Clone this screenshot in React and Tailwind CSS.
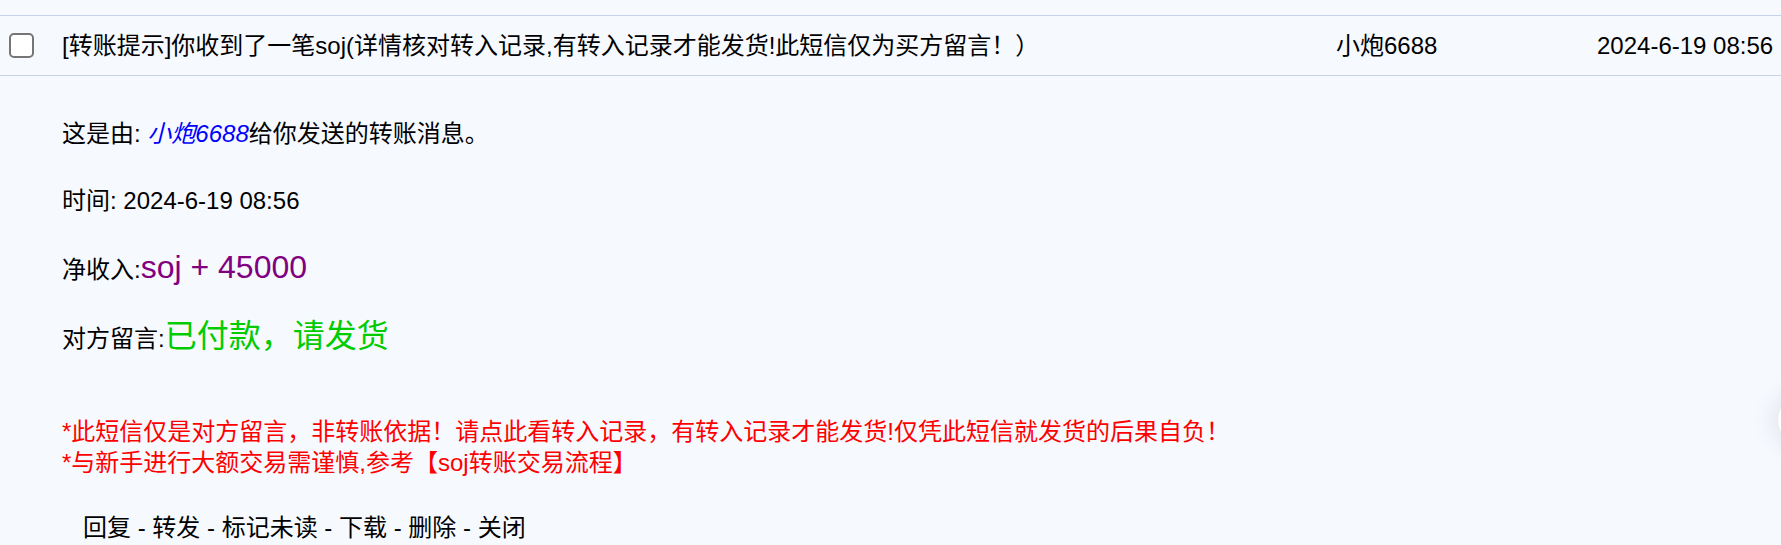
export default function App() {
  return (
    <div className="relative w-full h-[545px] overflow-hidden bg-[#f6f9fe] text-black text-[24px] font-['Liberation_Sans','Noto_Sans_CJK_SC',sans-serif] pt-[15px]">
      {/* message row */}
      <div className="flex items-center h-[61px] border-y border-[#c3d4e8] leading-[31px]">
        <span className="ml-[9px] w-[25px] h-[25px] shrink-0 rounded-[5px] border-2 border-[#767676] bg-white" />
        <div className="ml-[28px] w-[1274px] shrink-0 whitespace-nowrap">
          [转账提示]你收到了一笔soj(详情核对转入记录,有转入记录才能发货!此短信仅为买方留言！）
        </div>
        <div className="w-[261px] shrink-0 whitespace-nowrap">小炮6688</div>
        <div className="ml-auto pr-[9px] whitespace-nowrap">2024-6-19 08:56</div>
      </div>

      {/* message body */}
      <div className="pl-[62px] pt-[42px] leading-[31px]">
        <div>
          这是由: <a className="italic text-[#0000ff]">小炮6688</a>给你发送的转账消息。
        </div>
        <div className="mt-[36px]">时间: 2024-6-19 08:56</div>
        <div className="mt-[36px]">
          净收入:<span className="text-[32px] text-[#800080]">soj + 45000</span>
        </div>
        <div className="mt-[36px]">
          对方留言:<span className="text-[32px] text-[#00cc00]">已付款，请发货</span>
        </div>
        <div className="mt-[62px] text-[#ff0000]">
          <div>*此短信仅是对方留言，非转账依据！请点此看转入记录，有转入记录才能发货!仅凭此短信就发货的后果自负！</div>
          <div>*与新手进行大额交易需谨慎,参考【soj转账交易流程】</div>
        </div>
        <div className="mt-[34px] pl-[21px] whitespace-nowrap">
          回复 - 转发 - 标记未读 - 下载 - 删除 - 关闭
        </div>
      </div>

      {/* floating side button */}
      <div className="absolute left-[1778px] top-[396px] w-[48px] h-[48px] rounded-full bg-white shadow-[0_0_28px_rgba(30,40,60,0.14)]" />
    </div>
  );
}
